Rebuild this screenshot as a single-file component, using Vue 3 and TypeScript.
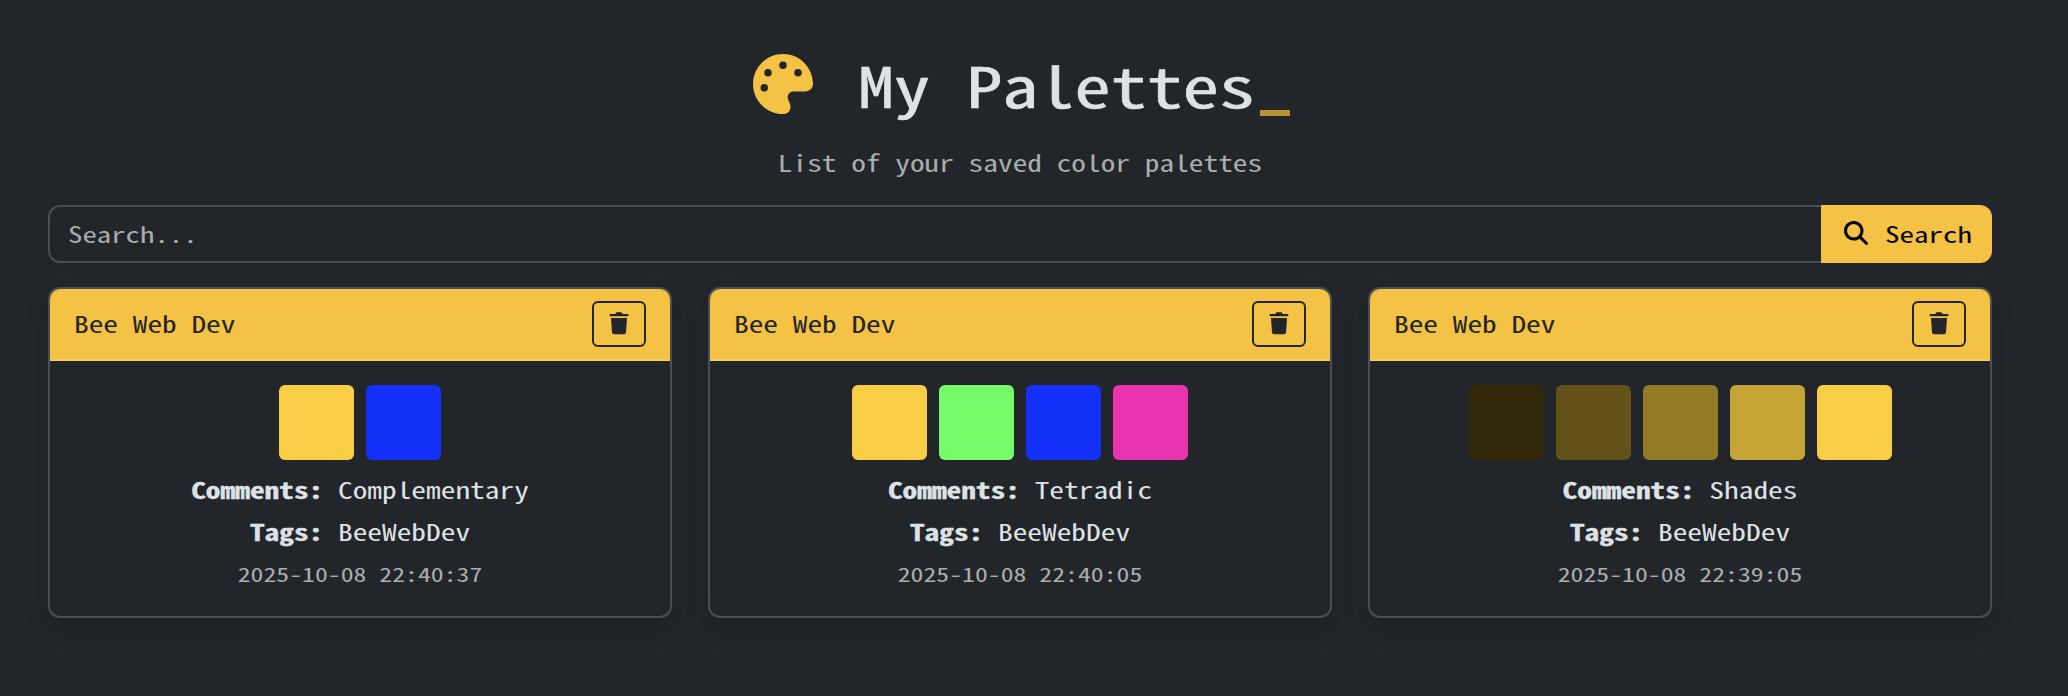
<script setup lang="ts">
interface Palette {
  title: string
  colors: string[]
  comments: string
  tags: string
  date: string
}
const palettes: Palette[] = [
  { title: 'Bee Web Dev', colors: ['#f9ce46', '#1331f8'], comments: 'Complementary', tags: 'BeeWebDev', date: '2025-10-08 22:40:37' },
  { title: 'Bee Web Dev', colors: ['#f9ce46', '#76fc6b', '#1331f8', '#ea33b0'], comments: 'Tetradic', tags: 'BeeWebDev', date: '2025-10-08 22:40:05' },
  { title: 'Bee Web Dev', colors: ['#32290b', '#635117', '#947b26', '#c5a536', '#f9ce46'], comments: 'Shades', tags: 'BeeWebDev', date: '2025-10-08 22:39:05' },
]
</script>

<template>
  <main class="page">
    <h1 class="title">
      <svg class="palette-icon" viewBox="0 0 512 512"><path fill="currentColor" d="M512 256c0 .9 0 1.8 0 2.7c-.4 36.5-33.6 61.3-70.1 61.3H344c-26.5 0-48 21.5-48 48c0 3.4 .4 6.7 1 9.9c2.1 10.2 6.5 20 10.8 29.9c6.1 13.8 12.1 27.5 12.1 42c0 31.8-21.6 60.7-53.4 62c-3.5 .1-7 .2-10.6 .2C114.6 512 0 397.4 0 256S114.6 0 256 0S512 114.6 512 256zM128 288a32 32 0 1 0-64 0 32 32 0 1 0 64 0zm0-96a32 32 0 1 0 0-64 32 32 0 1 0 0 64zM288 96a32 32 0 1 0-64 0 32 32 0 1 0 64 0zm96 96a32 32 0 1 0 0-64 32 32 0 1 0 0 64z" /></svg>
      <span class="title-text wide">My Palettes</span><span class="cursor"></span>
    </h1>
    <p class="subtitle wide">List of your saved color palettes</p>
    <form class="search" @submit.prevent>
      <div class="search-field">
        <input class="search-input wide" type="text" placeholder="Search..." />
      </div>
      <button class="search-button" type="submit">
        <svg class="search-icon" viewBox="0 0 512 512"><path fill="currentColor" d="M416 208c0 45.9-14.9 88.3-40 122.7L502.6 457.4c12.5 12.5 12.5 32.8 0 45.3s-32.8 12.5-45.3 0L330.7 376c-34.4 25.2-76.8 40-122.7 40C93.1 416 0 322.9 0 208S93.1 0 208 0S416 93.1 416 208zM208 352a144 144 0 1 0 0-288 144 144 0 1 0 0 288z" /></svg>
        <span class="wide">Search</span>
      </button>
    </form>
    <section class="cards">
      <article v-for="p in palettes" :key="p.date" class="card">
        <header class="card-header">
          <span class="wide">{{ p.title }}</span>
          <button class="delete" type="button" aria-label="Delete">
            <svg class="trash-icon" viewBox="0 0 20 24"><path fill="currentColor" d="M1.6 2H6.3L6.8 .9C7 .5 7.4.3 7.9.3h4.2c.5 0 .9.2 1.1.6l.5 1.1h4.7c.7 0 1.1.5 1.1 1.1s-.4 1.2-1.1 1.2H1.6C.9 4.3.5 3.8.5 3.100S.9 2 1.6 2zM2 6h16l-1 14.200c-.1 1.200-1 2-2.200 2H5.200c-1.200 0-2.100-.8-2.200-2z" /></svg>
          </button>
        </header>
        <div class="card-body">
          <div class="swatches">
            <span v-for="c in p.colors" :key="c" class="swatch" :style="{ backgroundColor: c }"></span>
          </div>
          <p class="line wide"><strong>Comments:</strong> {{ p.comments }}</p>
          <p class="line wide"><strong>Tags:</strong> {{ p.tags }}</p>
          <p class="date wide">{{ p.date }}</p>
        </div>
      </article>
    </section>
  </main>
</template>

<style>
body {
  background: #22262a;
}
</style>

<style scoped>
.page {
  box-sizing: border-box;
  width: 2068px;
  height: 696px;
  padding: 46px 76px 0 48px;
  overflow: hidden;
  color: #dee2e6;
  font-family: "Noto Sans CJK JP", "DejaVu Sans Mono", monospace;
  font-feature-settings: "hwid";
  font-size: 29.36px;
  font-kerning: none;
}
p, h1 { margin: 0; }
/* Flattens the tall half-width glyphs to ordinary monospace proportions. */
.wide {
  transform: translateY(-1.2px) scaleY(.77);
}
.title {
  display: flex;
  align-items: center;
  height: 78px;
  padding-left: 705px;
  font-size: 72.2px;
  font-weight: 400;
  line-height: 78px;
}
.palette-icon { width: 60px; height: 60px; margin-top: -2px; color: #f4c244; }
.title-text { margin-left: 45px; white-space: pre; -webkit-text-stroke: .8px currentColor; }
.cursor { width: 30px; height: 6px; margin: 56px 0 0 5px; background: #b89337; }
.subtitle {
  height: 36px;
  margin: 21px 0 24px;
  line-height: 36px;
  text-align: center;
  color: #a9adaf;
}
.search { display: flex; height: 58px; }
.search-field {
  flex: 1;
  display: flex;
  align-items: center;
  box-sizing: border-box;
  min-width: 0;
  padding: 0 18px;
  border: 2px solid #4a4e54;
  border-right: 0;
  border-radius: 12px 0 0 12px;
}
.search-input {
  width: 100%;
  padding: 0;
  border: 0;
  outline: 0;
  background: transparent;
  font: inherit;
  font-size: 28.8px;
  font-feature-settings: inherit;
  color: #dee2e6;
}
.search-input::placeholder { color: #a9adaf; opacity: 1; }
.search-button {
  display: flex;
  align-items: center;
  gap: 17px;
  box-sizing: border-box;
  width: 171px;
  padding: 0 0 0 23px;
  border: 0;
  border-radius: 0 12px 12px 0;
  background: #f4c244;
  color: #000;
  font: inherit;
  font-size: 29px;
  font-feature-settings: inherit;
}
.search-icon { width: 24px; height: 24px; margin-top: -2px; }
.cards {
  display: grid;
  grid-template-columns: repeat(3, 624px);
  gap: 36px;
  margin-top: 24px;
}
.card {
  box-sizing: border-box;
  height: 331px;
  overflow: hidden;
  border: 2px solid #4a4e54;
  border-radius: 12px;
  background: #22262a;
  box-shadow: 0 12px 24px rgba(0, 0, 0, .15);
}
.card-header {
  display: flex;
  align-items: center;
  justify-content: space-between;
  box-sizing: border-box;
  height: 72px;
  padding: 0 24px;
  border-bottom: 2px solid #f8cd5c;
  background: #f4c244;
  color: #22262a;
}
.delete {
  display: flex;
  align-items: center;
  justify-content: center;
  box-sizing: border-box;
  width: 54px;
  height: 46px;
  padding: 0;
  border: 2px solid #22262a;
  border-radius: 6px;
  background: transparent;
  color: #22262a;
}
.trash-icon { width: 20px; height: 24px; }
.card-body { padding-top: 24px; text-align: center; }
.swatches { display: flex; justify-content: center; gap: 12px; margin-bottom: 9px; }
.swatch { width: 75px; height: 75px; border-radius: 6px; }
.line { height: 42px; line-height: 42px; }
.line strong { font-weight: 700; -webkit-text-stroke: .4px currentColor; }
.date { height: 42px; margin-top: 1px; font-size: 25.75px; line-height: 42px; color: #a9adaf; }
</style>
